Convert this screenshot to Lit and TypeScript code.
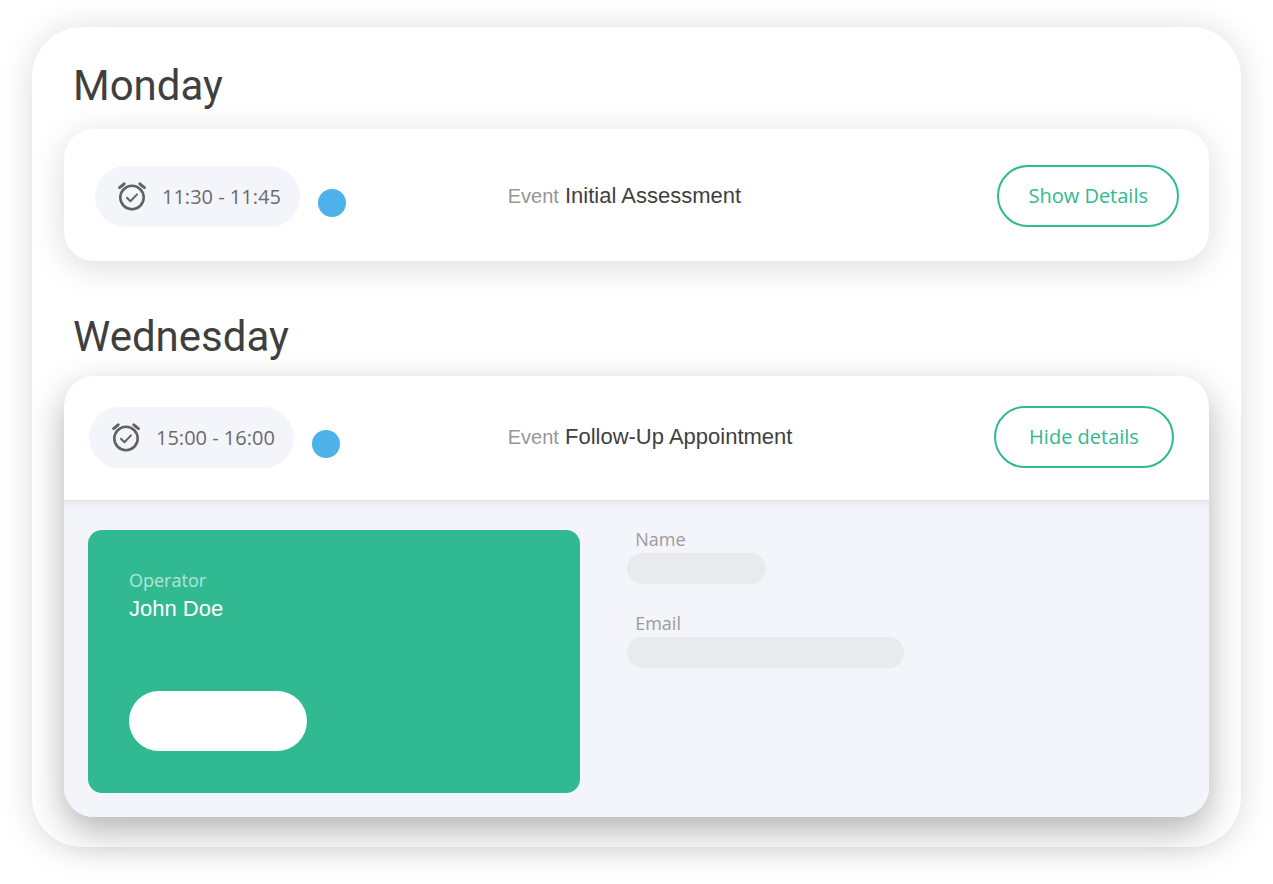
import { LitElement, html, css, svg, nothing } from "lit";
import { customElement, property, state } from "lit/decorators.js";

interface Appointment {
  id: string;
  day: string;
  time: string;
  title: string;
  operator?: string;
}

const appointments: Appointment[] = [
  { id: "mon", day: "Monday", time: "11:30 - 11:45", title: "Initial Assessment" },
  {
    id: "wed",
    day: "Wednesday",
    time: "15:00 - 16:00",
    title: "Follow-Up Appointment",
    operator: "John Doe",
  },
];

const alarmIcon = svg`
  <circle cx="15" cy="16.5" r="11.7" />
  <path d="M10 16.8l3.4 3.4 6.6-6.8" stroke-width="2" />
  <path d="M2.6 6.6l4.6-3.8M27.4 6.6l-4.6-3.8" stroke-width="3" />
`;

@customElement("appointment-card")
export class AppointmentCard extends LitElement {
  @property({ attribute: false }) item!: Appointment;
  @property({ type: Boolean, reflect: true }) open = false;

  static styles = css`
    :host {
      display: block;
      border-radius: 30px;
      background: #fff;
      box-shadow: 0 6px 34px rgba(0, 0, 0, 0.14);
    }
    :host([open]) {
      box-shadow: 0 14px 36px rgba(0, 0, 0, 0.3);
    }
    .summary {
      display: grid;
      grid-template-columns: 31fr 49fr;
      align-items: center;
      padding: 36px 0 34px;
    }
    .when {
      display: flex;
      align-items: center;
      gap: 18px;
      padding-left: 31px;
    }
    .time {
      display: flex;
      align-items: center;
      gap: 15px;
      height: 61px;
      box-sizing: border-box;
      padding: 0 19px 0 22px;
      border-radius: 31px;
      background: #f4f5fa;
      color: #6b6b6b;
      font-size: 20px;
      white-space: nowrap;
    }
    .alarm {
      width: 30px;
      height: 30px;
      fill: none;
      stroke: #626262;
      stroke-width: 2.6;
      stroke-linecap: round;
      stroke-linejoin: round;
    }
    .dot {
      width: 28px;
      height: 28px;
      margin-top: 14px;
      border-radius: 50%;
      background: #4db1ea;
    }
    .what {
      display: flex;
      align-items: center;
      justify-content: space-between;
      padding-right: 30px;
    }
    .event {
      margin: 0;
      font: 22px/30px "Liberation Sans", Arial, sans-serif;
      color: #3f3f3f;
    }
    .kind {
      font-size: 20px;
      color: #969696;
    }
    .toggle {
      min-width: 180px;
      height: 62px;
      padding: 0 29px;
      border: 2px solid #31b992;
      border-radius: 31px;
      background: #fff;
      color: #31b992;
      font: 20px/28px "Open Sans", sans-serif;
      white-space: nowrap;
      cursor: pointer;
    }
    :host([open]) .summary {
      padding: 30px 0 32px;
    }
    :host([open]) .when {
      padding-left: 25px;
    }
    :host([open]) .what {
      padding-right: 35px;
    }
    .details {
      display: grid;
      grid-template-columns: 15fr 17fr;
      gap: 47px;
      padding: 29px 24px 24px;
      border-top: 1px solid #e2e2e4;
      border-radius: 0 0 30px 30px;
      background: linear-gradient(#ebecf0, #f4f5fa 10px);
    }
    .operator {
      display: flex;
      flex-direction: column;
      align-items: flex-start;
      padding: 36px 41px 42px;
      border-radius: 14px;
      background: #31b992;
    }
    .role {
      font-size: 18px;
      line-height: 28px;
      color: #b5e5d5;
    }
    .person {
      font: 22px/30px "Liberation Sans", Arial, sans-serif;
      color: #fff;
    }
    .action {
      width: 178px;
      height: 60px;
      margin-top: 67px;
      border: 0;
      border-radius: 30px;
      background: #fff;
    }
    .contact {
      display: flex;
      flex-direction: column;
      align-items: flex-start;
      gap: 30px;
    }
    .field {
      display: flex;
      flex-direction: column;
    }
    .field label {
      padding: 0 8px;
      margin-top: -5px;
      font-size: 18px;
      line-height: 28px;
      color: #9b9b9b;
    }
    .field input {
      box-sizing: border-box;
      width: 139px;
      height: 31px;
      border: 0;
      padding: 0 14px;
      border-radius: 16px;
      background: #e9eaee;
    }
    .field .wide {
      width: 277px;
    }
  `;

  private toggle() {
    this.dispatchEvent(new CustomEvent("toggle-details", { detail: this.item.id }));
  }

  render() {
    const { time, title, operator } = this.item;
    return html`
      <div class="summary">
        <div class="when">
          <div class="time">
            <svg class="alarm" viewBox="0 0 30 30" aria-hidden="true">${alarmIcon}</svg>
            <span>${time}</span>
          </div>
          <span class="dot"></span>
        </div>
        <div class="what">
          <p class="event"><span class="kind">Event</span> ${title}</p>
          <button class="toggle" aria-expanded=${this.open} @click=${this.toggle}>
            ${this.open ? "Hide details" : "Show Details"}
          </button>
        </div>
      </div>
      ${this.open
        ? html`<div class="details">
            ${operator
              ? html`<div class="operator">
                  <span class="role">Operator</span>
                  <span class="person">${operator}</span>
                  <button class="action" aria-label="Contact operator"></button>
                </div>`
              : html`<span></span>`}
            <div class="contact">
              <div class="field">
                <label for="name">Name</label>
                <input id="name" type="text" readonly />
              </div>
              <div class="field">
                <label for="email">Email</label>
                <input id="email" class="wide" type="email" readonly />
              </div>
            </div>
          </div>`
        : nothing}
    `;
  }
}

@customElement("app-root")
export class AppRoot extends LitElement {
  @state() private openId = "wed";

  static styles = css`
    :host {
      display: block;
      padding: 27px 32px 37px;
      background: #fff;
      font-family: "Open Sans", sans-serif;
    }
    .panel {
      display: flex;
      flex-direction: column;
      gap: 50px;
      padding: 33px 32px 30px;
      border-radius: 50px;
      background: #fff;
      box-shadow: 0 2px 34px rgba(0, 0, 0, 0.14);
    }
    .day {
      display: flex;
      flex-direction: column;
      gap: 13px;
    }
    .heading {
      margin: 0;
      padding: 0 9px;
      font: 400 42px/52px Roboto, sans-serif;
      color: #3f3f3f;
    }
    .first {
      gap: 17px;
    }
  `;

  private onToggle(e: CustomEvent<string>) {
    this.openId = this.openId === e.detail ? "" : e.detail;
  }

  render() {
    return html`
      <main class="panel">
        ${appointments.map(
          (item, i) => html`
            <section class="day ${i === 0 ? "first" : ""}">
              <h2 class="heading">${item.day}</h2>
              <appointment-card
                .item=${item}
                ?open=${this.openId === item.id}
                @toggle-details=${this.onToggle}
              ></appointment-card>
            </section>
          `,
        )}
      </main>
    `;
  }
}
